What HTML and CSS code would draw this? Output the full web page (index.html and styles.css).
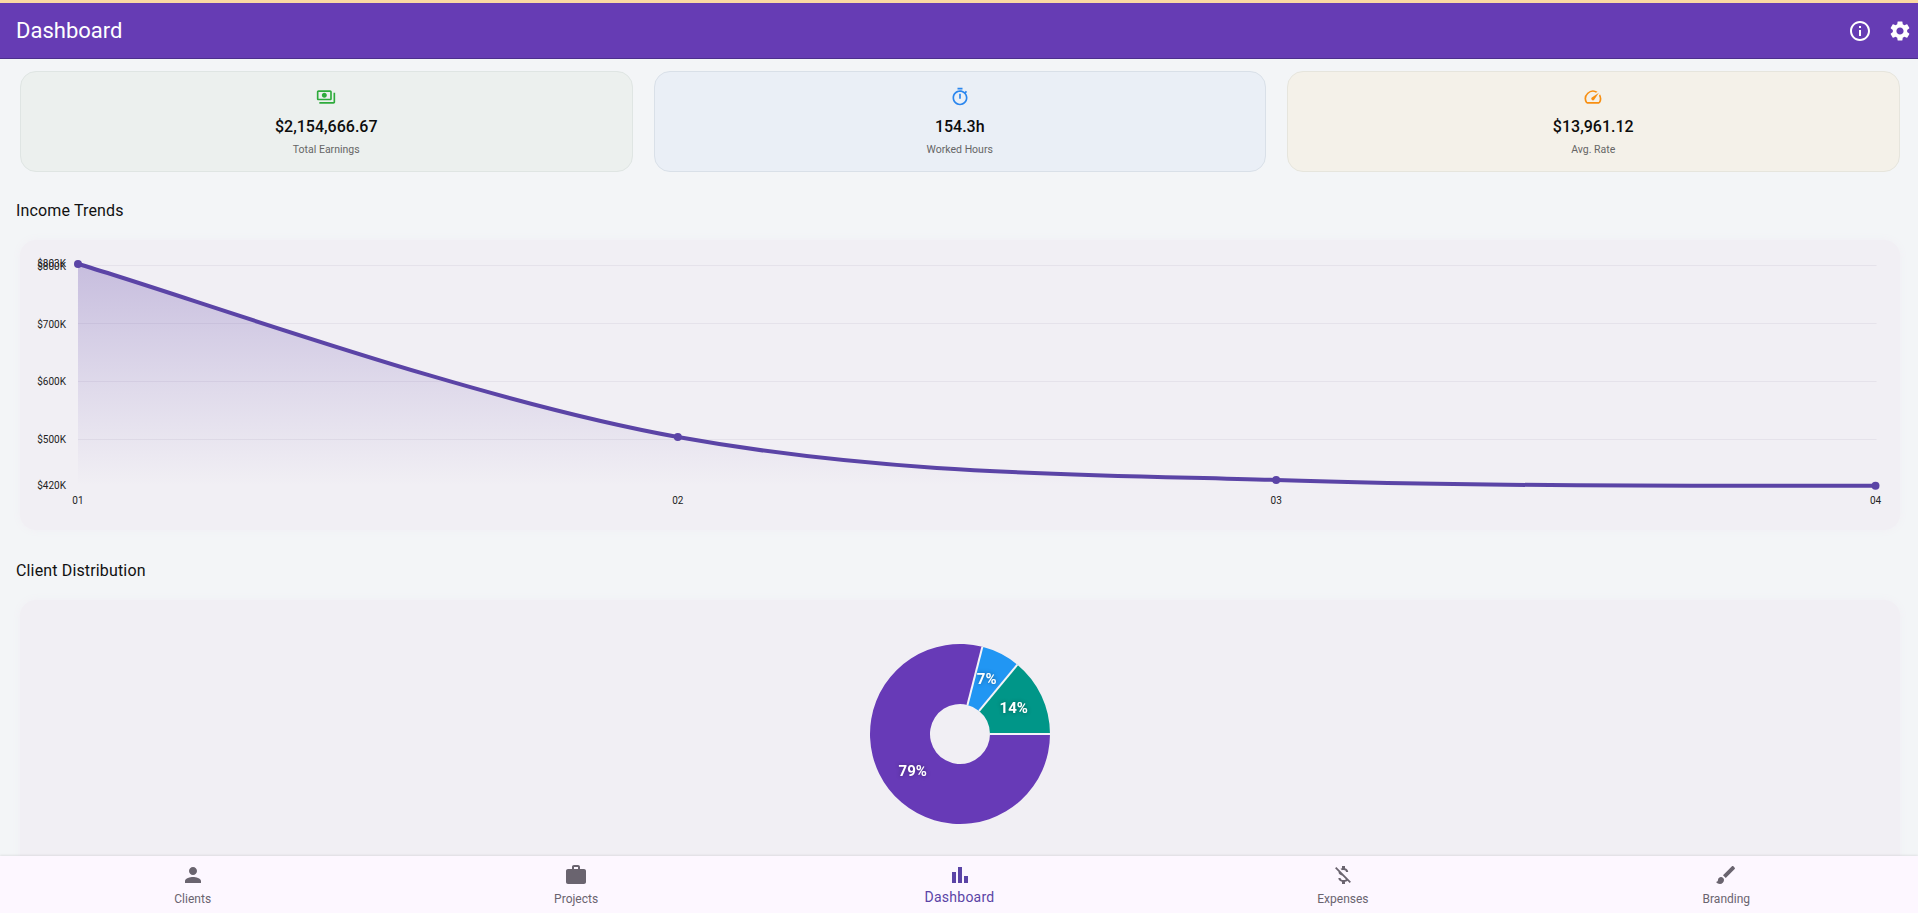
FILE: index.html
```html
<!DOCTYPE html>
<html>

<head>
    <meta charset="UTF-8">
    <meta name="viewport" content="width=device-width, initial-scale=1">
    <link rel="stylesheet" href="styles.css">
    <title>Dashboard</title>
</head>

<body>
    <div class="app">
        <div class="top-stripe"></div>
        <header class="app-bar">
            <h1>Dashboard</h1>
            <div class="app-bar-actions">
                <svg class="icon" viewBox="0 0 24 24"><path d="M11 7h2v2h-2zm0 4h2v6h-2zm1-9C6.48 2 2 6.48 2 12s4.48 10 10 10 10-4.48 10-10S17.52 2 12 2zm0 18c-4.41 0-8-3.59-8-8s3.59-8 8-8 8 3.59 8 8-3.59 8-8 8z"/></svg>
                <svg class="icon" viewBox="0 0 24 24"><path d="M19.14 12.94c.04-.3.06-.61.06-.94 0-.32-.02-.64-.07-.94l2.03-1.58c.18-.14.23-.41.12-.61l-1.92-3.32c-.12-.22-.37-.29-.59-.22l-2.39.96c-.5-.38-1.03-.7-1.62-.94l-.36-2.54c-.04-.24-.24-.41-.48-.41h-3.84c-.24 0-.43.17-.47.41l-.36 2.54c-.59.24-1.13.57-1.62.94l-2.39-.96c-.22-.08-.47 0-.59.22L2.74 8.87c-.12.21-.08.47.12.61l2.03 1.58c-.05.3-.09.63-.09.94s.02.64.07.94l-2.03 1.58c-.18.14-.23.41-.12.61l1.92 3.32c.12.22.37.29.59.22l2.39-.96c.5.38 1.03.7 1.62.94l.36 2.54c.05.24.24.41.48.41h3.84c.24 0 .44-.17.47-.41l.36-2.54c.59-.24 1.13-.56 1.62-.94l2.39.96c.22.08.47 0 .59-.22l1.92-3.32c.12-.22.07-.47-.12-.61l-2.01-1.58zM12 15.6c-1.98 0-3.6-1.62-3.6-3.6s1.62-3.6 3.6-3.6 3.6 1.62 3.6 3.6-1.62 3.6-3.6 3.6z"/></svg>
            </div>
        </header>

        <main class="content">
            <div class="stats">
                <div class="stat stat-green">
                    <svg class="icon" viewBox="0 0 24 24"><path d="M19 14V6c0-1.1-.9-2-2-2H3c-1.1 0-2 .9-2 2v8c0 1.1.9 2 2 2h14c1.1 0 2-.9 2-2zm-2 0H3V6h14v8zm-7-7c-1.66 0-3 1.34-3 3s1.34 3 3 3 3-1.34 3-3-1.34-3-3-3zm13 0v11c0 1.1-.9 2-2 2H4v-2h17V7h2z"/></svg>
                    <div class="stat-value">$2,154,666.67</div>
                    <div class="stat-label">Total Earnings</div>
                </div>
                <div class="stat stat-blue">
                    <svg class="icon" viewBox="0 0 24 24"><path d="M15 1H9v2h6V1zm-4 13h2V8h-2v6zm8.03-6.61l1.42-1.42c-.43-.51-.9-.99-1.41-1.41l-1.42 1.42C16.07 4.74 14.12 4 12 4c-4.97 0-9 4.03-9 9s4.02 9 9 9 9-4.03 9-9c0-2.12-.74-4.07-1.97-5.61zM12 20c-3.87 0-7-3.13-7-7s3.13-7 7-7 7 3.13 7 7-3.13 7-7 7z"/></svg>
                    <div class="stat-value">154.3h</div>
                    <div class="stat-label">Worked Hours</div>
                </div>
                <div class="stat stat-orange">
                    <svg class="icon" viewBox="0 0 24 24"><path d="M20.38 8.57l-1.23 1.85a8 8 0 0 1-.22 7.58H5.07A8 8 0 0 1 15.58 6.85l1.85-1.23A10 10 0 0 0 3.35 19a2 2 0 0 0 1.72 1h13.85a2 2 0 0 0 1.74-1 10 10 0 0 0-.27-10.44zm-9.79 6.84a2 2 0 0 0 2.83 0l5.66-8.49-8.49 5.66a2 2 0 0 0 0 2.83z"/></svg>
                    <div class="stat-value">$13,961.12</div>
                    <div class="stat-label">Avg. Rate</div>
                </div>
            </div>

            <h2 class="section-title income-title">Income Trends</h2>
            <div class="panel chart-panel">
                <!-- viewBox uses page coordinates, so the points read like the screen -->
                <svg class="line-chart" viewBox="20 240 1880 290">
                    <defs>
                        <linearGradient id="areaFill" x1="0" y1="0" x2="0" y2="1">
                            <stop offset="0" stop-color="#5b3ea6" stop-opacity="0.28"/>
                            <stop offset="0.55" stop-color="#5b3ea6" stop-opacity="0.12"/>
                            <stop offset="1" stop-color="#5b3ea6" stop-opacity="0"/>
                        </linearGradient>
                    </defs>
                    <g class="grid">
                        <line x1="78" y1="265.5" x2="1877" y2="265.5"/>
                        <line x1="78" y1="323.5" x2="1877" y2="323.5"/>
                        <line x1="78" y1="381.5" x2="1877" y2="381.5"/>
                        <line x1="78" y1="439.5" x2="1877" y2="439.5"/>
                    </g>
                    <path class="area" d="M78 264C183 294.3 468.3 399.2 678 437C887.7 474.8 1066.9 474 1276.5 480C1486 487.5 1771 485.7 1876 485.7L1876 486L78 486Z" fill="url(#areaFill)"/>
                    <path class="curve" d="M78 264C183 294.3 468.3 399.2 678 437C887.7 474.8 1066.9 474 1276.5 480C1486 487.5 1771 485.7 1876 485.7"/>
                    <g class="dots">
                        <circle cx="78" cy="264" r="4"/>
                        <circle cx="678" cy="437" r="4"/>
                        <circle cx="1276.5" cy="480" r="4"/>
                        <circle cx="1876" cy="485.7" r="4"/>
                    </g>
                    <g class="y-labels">
                        <text x="66" y="263.5">$803K</text>
                        <text x="66" y="266">$800K</text>
                        <text x="66" y="324">$700K</text>
                        <text x="66" y="382">$600K</text>
                        <text x="66" y="440">$500K</text>
                        <text x="66" y="486">$420K</text>
                    </g>
                    <g class="x-labels">
                        <text x="78" y="501">01</text>
                        <text x="678" y="501">02</text>
                        <text x="1276.5" y="501">03</text>
                        <text x="1876" y="501">04</text>
                    </g>
                </svg>
            </div>

            <h2 class="section-title client-title">Client Distribution</h2>
            <div class="panel pie-panel">
                <svg class="pie" viewBox="-90 -90 180 180">
                    <path class="slice-purple" d="M30 0L90 0A90 90 0 1 1 22.38 -87.17L7.46 -29.06A30 30 0 1 0 30 0Z"/>
                    <path class="slice-blue" d="M7.46 -29.06L22.38 -87.17A90 90 0 0 1 57.37 -69.35L19.12 -23.12A30 30 0 0 0 7.46 -29.06Z"/>
                    <path class="slice-teal" d="M19.12 -23.12L57.37 -69.35A90 90 0 0 1 90 0L30 0A30 30 0 0 0 19.12 -23.12Z"/>
                    <g class="pie-gaps">
                        <line x1="30" y1="0" x2="90" y2="0"/>
                        <line x1="7.46" y1="-29.06" x2="22.38" y2="-87.17"/>
                        <line x1="19.12" y1="-23.12" x2="57.37" y2="-69.35"/>
                    </g>
                    <g class="pie-labels">
                        <text x="-47.3" y="36.5">79%</text>
                        <text x="26.7" y="-54.7">7%</text>
                        <text x="53.7" y="-26.5">14%</text>
                    </g>
                </svg>
            </div>
        </main>

        <nav class="bottom-nav">
            <div class="nav-item">
                <svg class="icon" viewBox="0 0 24 24"><path d="M12 12c2.21 0 4-1.79 4-4s-1.79-4-4-4-4 1.79-4 4 1.79 4 4 4zm0 2c-2.67 0-8 1.34-8 4v2h16v-2c0-2.66-5.33-4-8-4z"/></svg>
                <span>Clients</span>
            </div>
            <div class="nav-item">
                <svg class="icon" viewBox="0 0 24 24"><path d="M20 6h-4V4c0-1.11-.89-2-2-2h-4c-1.11 0-2 .89-2 2v2H4c-1.11 0-1.99.89-1.99 2L2 19c0 1.11.89 2 2 2h16c1.11 0 2-.89 2-2V8c0-1.11-.89-2-2-2zm-6 0h-4V4h4v2z"/></svg>
                <span>Projects</span>
            </div>
            <div class="nav-item active">
                <svg class="icon" viewBox="0 0 24 24"><path d="M4 9h4v11H4zm12 4h4v7h-4zm-6-9h4v16h-4z"/></svg>
                <span>Dashboard</span>
            </div>
            <div class="nav-item">
                <svg class="icon" viewBox="0 0 24 24"><path d="M12.5 6.9c1.78 0 2.44.85 2.5 2.1h2.21c-.07-1.72-1.12-3.3-3.21-3.81V3h-3v2.16c-.53.12-1.03.3-1.48.54l1.47 1.47c.41-.17.91-.27 1.51-.27zM5.33 4.06L4.06 5.33 7.5 8.77c0 2.08 1.56 3.22 3.91 3.91l3.51 3.51c-.34.48-1.05.91-2.42.91-2.06 0-2.87-.92-2.98-2.1h-2.2c.12 2.19 1.76 3.42 3.68 3.83V21h3v-2.15c.96-.18 1.83-.55 2.46-1.12l2.22 2.22 1.27-1.27L5.33 4.06z"/></svg>
                <span>Expenses</span>
            </div>
            <div class="nav-item">
                <svg class="icon" viewBox="0 0 24 24"><path d="M7 14c-1.66 0-3 1.34-3 3 0 1.31-1.16 2-2 2 .92 1.22 2.49 2 4 2 2.21 0 4-1.79 4-4 0-1.66-1.34-3-3-3zm13.71-9.37l-1.34-1.34c-.39-.39-1.02-.39-1.41 0L9 12.25 11.75 15l8.96-8.96c.39-.39.39-1.02 0-1.41z"/></svg>
                <span>Branding</span>
            </div>
        </nav>
    </div>
</body>

</html>
```

FILE: styles.css
```css
* {
    box-sizing: border-box;
}

html, body {
    margin: 0;
    height: 100%;
    overflow: hidden;
}

body {
    font-family: Roboto, "Liberation Sans", sans-serif;
    background: #f3f5f7;
    color: #111;
}

.app {
    display: flex;
    flex-direction: column;
    height: 913px;
}

.icon {
    display: block;
    width: 24px;
    height: 24px;
    fill: currentColor;
}

.top-stripe {
    flex: none;
    height: 3px;
    background: #fbd9a2;
}

.app-bar {
    flex: none;
    display: flex;
    align-items: center;
    justify-content: space-between;
    height: 56px;
    padding: 0 6px 0 16px;
    background: #663cb4;
    border-bottom: 1px solid #4c2f8c;
    color: #fff;
}

.app-bar h1 {
    margin: 0;
    font-size: 22px;
    font-weight: 400;
}

.app-bar-actions {
    display: flex;
    gap: 16px;
}

.content {
    flex: 1;
    min-height: 0;
    overflow: hidden;
    padding: 12px 18.5px 0 20px;
}

.stats {
    display: grid;
    grid-template-columns: repeat(3, 1fr);
    gap: 21px;
}

.stat {
    display: flex;
    flex-direction: column;
    align-items: center;
    height: 101px;
    padding-top: 15px;
    border: 1px solid;
    border-radius: 16px;
}

.stat .icon {
    width: 20px;
    height: 20px;
}

.stat-green {
    background: #ecf0ee;
    border-color: #dfe5e3;
}

.stat-green .icon {
    color: #2eab3c;
}

.stat-blue {
    background: #eaeff6;
    border-color: #d9e0e8;
}

.stat-blue .icon {
    color: #2a86ee;
}

.stat-orange {
    background: #f4f1e9;
    border-color: #e6e5dd;
}

.stat-orange .icon {
    color: #f78f12;
}

.stat-value {
    margin-top: 8px;
    font-size: 16px;
    line-height: 24px;
    font-weight: 500;
    color: #0c0c0c;
}

.stat-label {
    margin-top: 3px;
    font-size: 10.5px;
    line-height: 16px;
    color: #666;
}

.section-title {
    margin: 0 0 0 -4px;
    font-size: 16px;
    line-height: 24px;
    font-weight: 450;
    letter-spacing: 0.15px;
}

.income-title {
    margin-top: 27px;
    margin-bottom: 17px;
}

.client-title {
    margin-top: 29px;
    margin-bottom: 17px;
}

.panel {
    border-radius: 16px;
    background: #f1eff4;
    box-shadow: 0 0 8px #f1eff4;
}

.chart-panel {
    height: 290px;
}

.line-chart {
    display: block;
    width: 100%;
    height: 100%;
}

.grid line {
    stroke: #e5e2ea;
    stroke-width: 1;
}

.curve {
    fill: none;
    stroke: #5b44a6;
    stroke-width: 4;
    stroke-linecap: round;
}

.dots circle {
    fill: #5b44a6;
}

.y-labels text,
.x-labels text {
    font-size: 10px;
    fill: #222;
    dominant-baseline: central;
}

.y-labels text {
    text-anchor: end;
}

.x-labels text {
    text-anchor: middle;
}

.pie-panel {
    height: 300px;
    padding-top: 44px;
}

.pie {
    display: block;
    width: 180px;
    height: 180px;
    margin: 0 auto;
    overflow: visible;
}

.slice-purple {
    fill: #673ab7;
}

.slice-blue {
    fill: #2196f3;
}

.slice-teal {
    fill: #009688;
}

.pie-gaps line {
    stroke: #f5f3f8;
    stroke-width: 2;
}

.pie-labels text {
    font-size: 15px;
    font-weight: 700;
    fill: #fff;
    text-anchor: middle;
    dominant-baseline: central;
    filter: drop-shadow(0 0 2px rgba(0, 0, 0, 0.35));
}

.bottom-nav {
    flex: none;
    position: relative;
    display: flex;
    height: 57px;
    padding: 7px 0 0 1px;
    background: #fdf7ff;
    box-shadow: 0 -1px 2px rgba(0, 0, 0, 0.08);
}

.nav-item {
    flex: 1;
    display: flex;
    flex-direction: column;
    align-items: center;
    color: #6a646f;
    font-size: 12px;
    line-height: 16px;
}

.nav-item span {
    margin-top: 4px;
}

.nav-item.active {
    color: #5b44a6;
    font-size: 14px;
    letter-spacing: 0.25px;
}

.nav-item.active span {
    margin-top: 2px;
}
```
